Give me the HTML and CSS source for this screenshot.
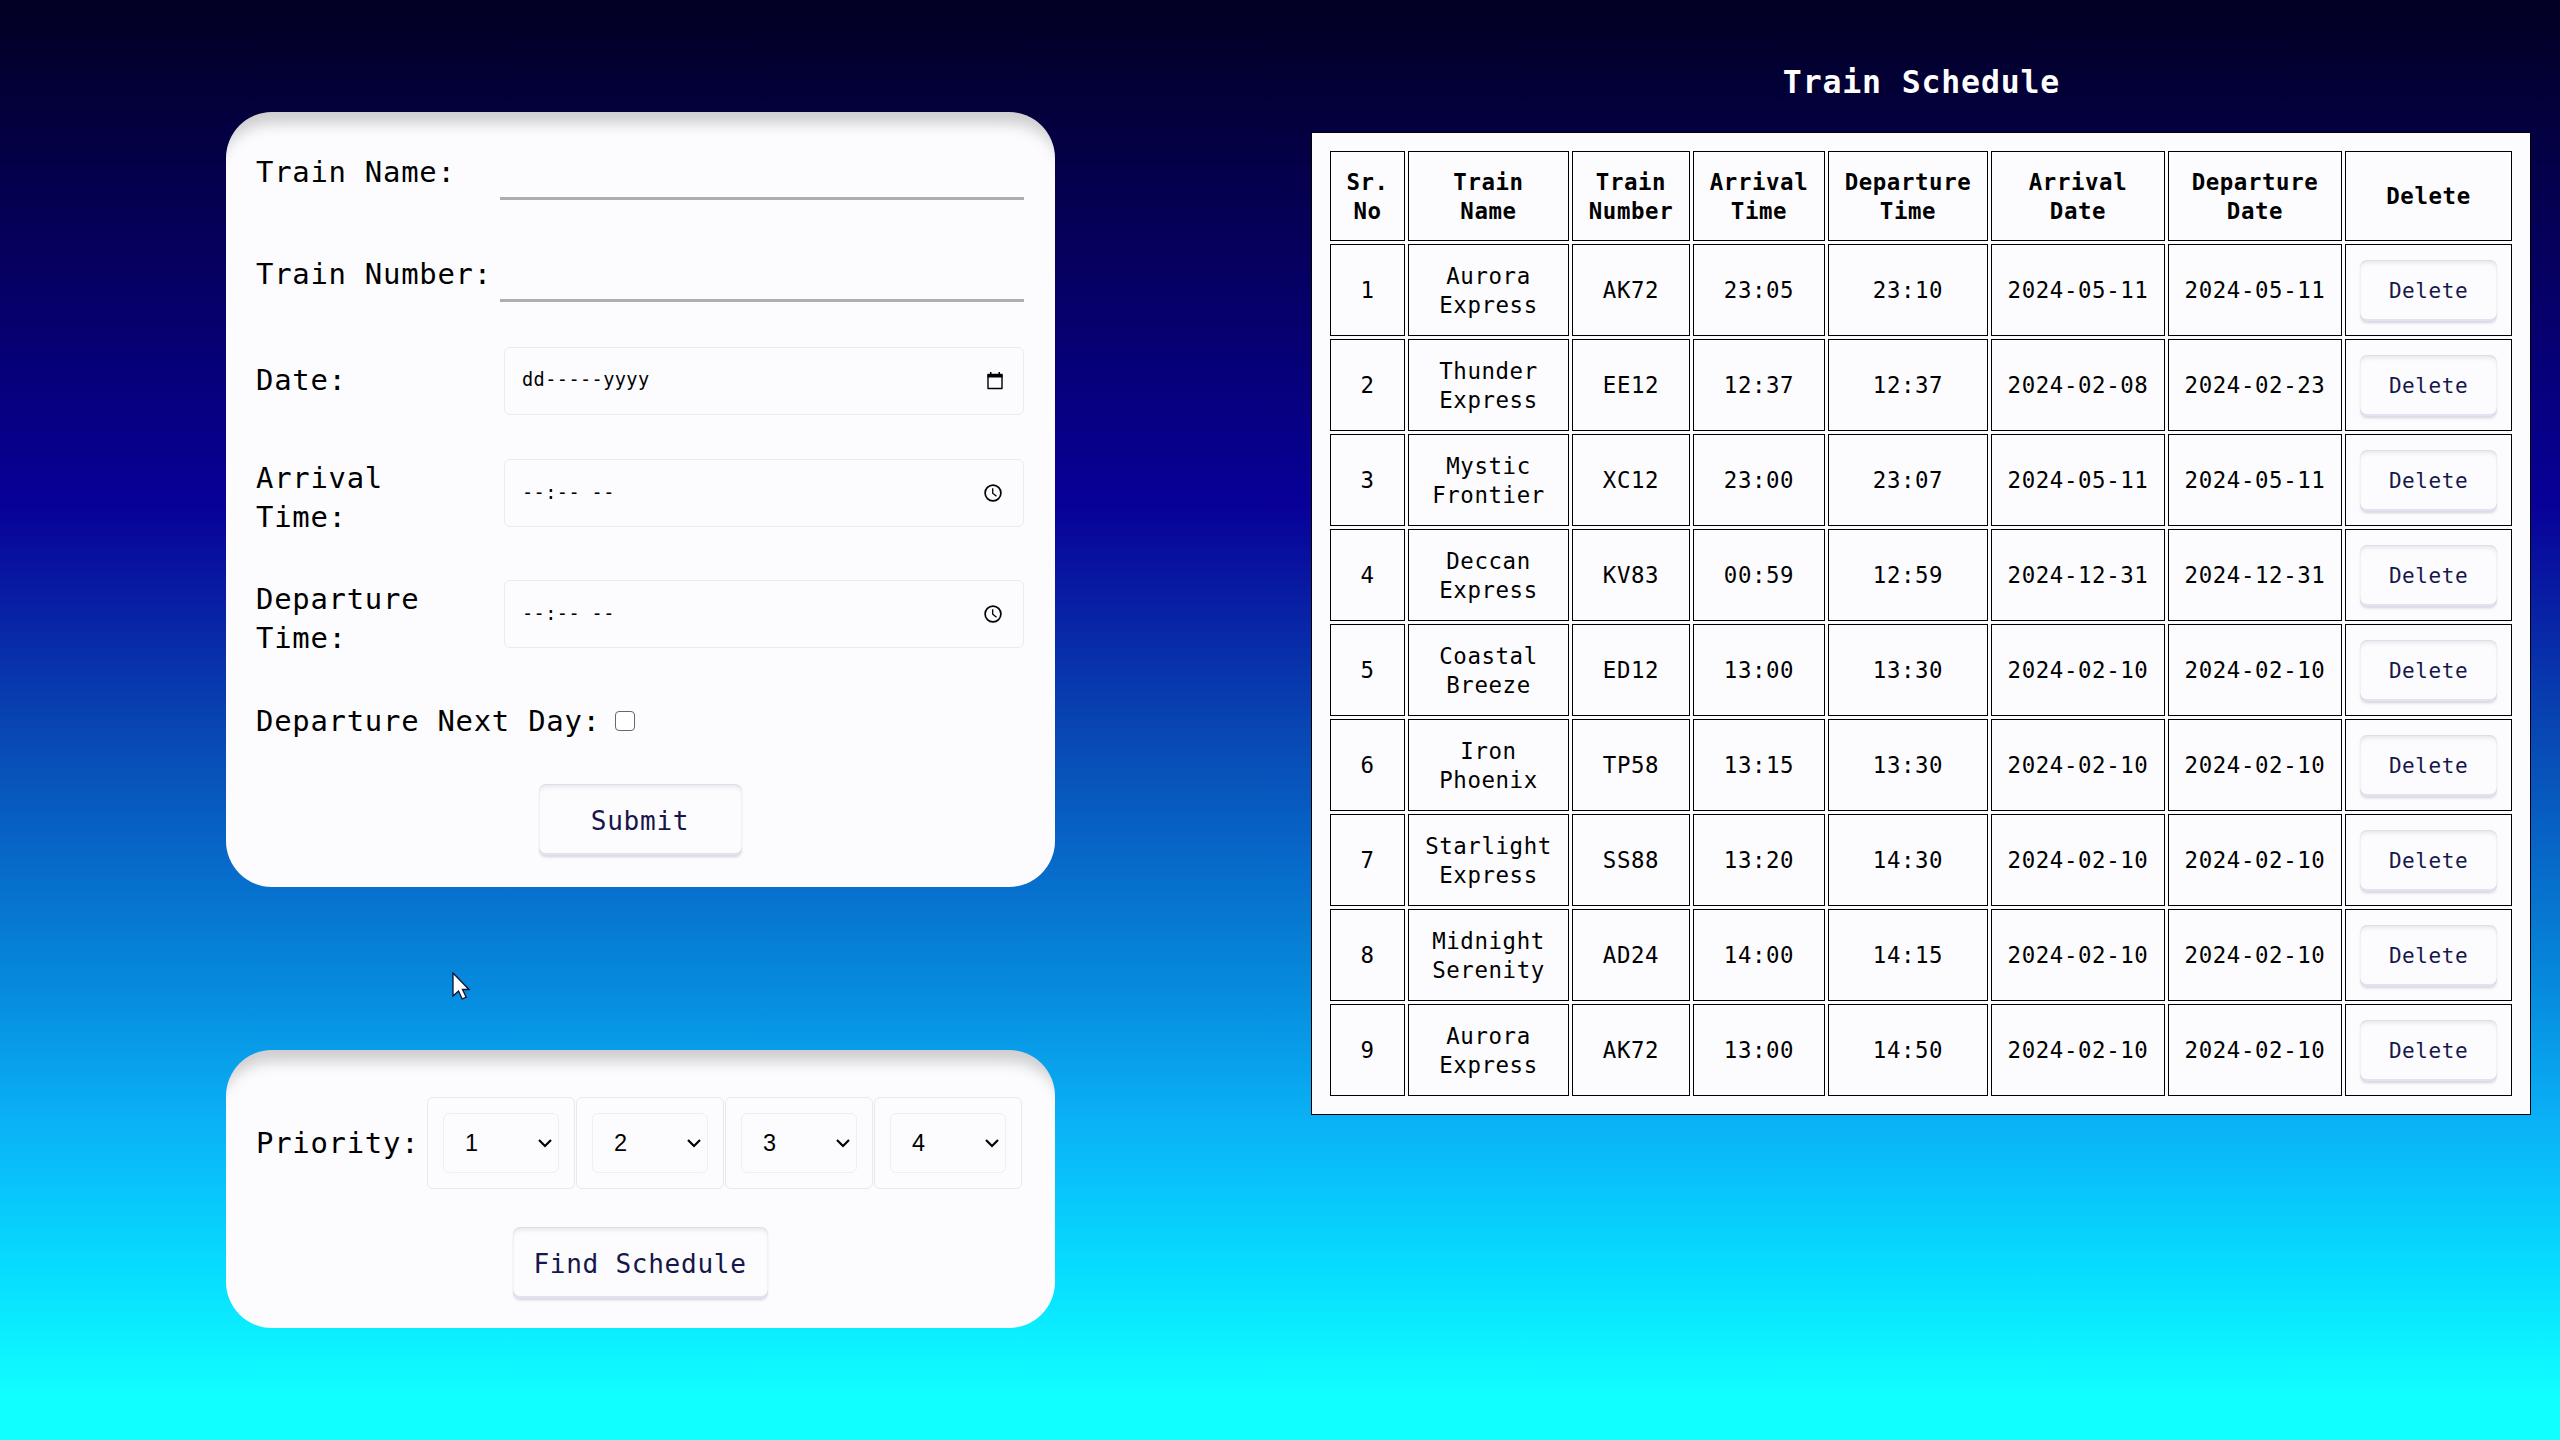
FILE: index.html
```html
<!DOCTYPE html>
<html lang="en">
<head>
<meta charset="utf-8">
<title>Train Schedule</title>
<link rel="stylesheet" href="styles.css">
</head>
<body>
<main class="page">
  <section class="forms">
    <form class="card train-form">
      <div class="row row-line"><label class="label">Train Name:</label><span class="line-input"></span></div>
      <div class="row row-line"><label class="label">Train Number:</label><span class="line-input"></span></div>
      <div class="row row-date"><label class="label">Date:</label>
        <span class="picker"><span>dd-----yyyy</span>
          <svg class="icon" viewBox="0 0 16 18"><path d="M1 3h14v13.5H1z" fill="none" stroke="#000" stroke-width="1.4" stroke-linejoin="round"/><path d="M.5 1.8h15V5.500H.5zM3 0h1.500v3H3zM11.500 0H13v3h-1.500z"/></svg></span></div>
      <div class="row row-time"><label class="label">Arrival<br>Time:</label>
        <span class="picker picker-time"><span>--:-- --</span>
          <svg class="icon" viewBox="0 0 18 18"><circle cx="9" cy="9" r="7.900" fill="none" stroke="#000" stroke-width="1.700"/><path d="M8.700 4.300v5l3.800 3" fill="none" stroke="#000" stroke-width="1.300"/></svg></span></div>
      <div class="row row-time"><label class="label">Departure<br>Time:</label>
        <span class="picker picker-time"><span>--:-- --</span>
          <svg class="icon" viewBox="0 0 18 18"><circle cx="9" cy="9" r="7.900" fill="none" stroke="#000" stroke-width="1.700"/><path d="M8.700 4.300v5l3.800 3" fill="none" stroke="#000" stroke-width="1.300"/></svg></span></div>
      <div class="row row-check"><label>Departure Next Day:</label><span class="checkbox"></span></div>
      <button type="button" class="btn btn-submit">Submit</button>
    </form>
    <form class="card priority-form">
      <div class="row row-priority"><label class="label-priority">Priority:</label>
        <div class="selects">
          <span class="select-box"><span class="select">1<svg class="chevron" viewBox="0 0 14 9"><path d="M1 1l6 6 6-6"/></svg></span></span>
          <span class="select-box"><span class="select">2<svg class="chevron" viewBox="0 0 14 9"><path d="M1 1l6 6 6-6"/></svg></span></span>
          <span class="select-box"><span class="select">3<svg class="chevron" viewBox="0 0 14 9"><path d="M1 1l6 6 6-6"/></svg></span></span>
          <span class="select-box"><span class="select">4<svg class="chevron" viewBox="0 0 14 9"><path d="M1 1l6 6 6-6"/></svg></span></span>
        </div>
      </div>
      <button type="button" class="btn btn-find">Find Schedule</button>
    </form>
  </section>
  <section class="schedule">
    <h2 class="title">Train Schedule</h2>
    <table class="table">
      <colgroup><col class="c-no"><col class="c-name"><col class="c-num"><col class="c-arr"><col class="c-dep"><col class="c-date"><col class="c-date"><col class="c-del"></colgroup>
      <thead><tr><th>Sr.<br>No</th><th>Train<br>Name</th><th>Train<br>Number</th><th>Arrival<br>Time</th><th>Departure<br>Time</th><th>Arrival<br>Date</th><th>Departure<br>Date</th><th>Delete</th></tr></thead>
      <tbody>
        <tr><td>1</td><td>Aurora<br>Express</td><td>AK72</td><td>23:05</td><td>23:10</td><td>2024-05-11</td><td>2024-05-11</td><td><button class="btn btn-delete">Delete</button></td></tr>
        <tr><td>2</td><td>Thunder<br>Express</td><td>EE12</td><td>12:37</td><td>12:37</td><td>2024-02-08</td><td>2024-02-23</td><td><button class="btn btn-delete">Delete</button></td></tr>
        <tr><td>3</td><td>Mystic<br>Frontier</td><td>XC12</td><td>23:00</td><td>23:07</td><td>2024-05-11</td><td>2024-05-11</td><td><button class="btn btn-delete">Delete</button></td></tr>
        <tr><td>4</td><td>Deccan<br>Express</td><td>KV83</td><td>00:59</td><td>12:59</td><td>2024-12-31</td><td>2024-12-31</td><td><button class="btn btn-delete">Delete</button></td></tr>
        <tr><td>5</td><td>Coastal<br>Breeze</td><td>ED12</td><td>13:00</td><td>13:30</td><td>2024-02-10</td><td>2024-02-10</td><td><button class="btn btn-delete">Delete</button></td></tr>
        <tr><td>6</td><td>Iron<br>Phoenix</td><td>TP58</td><td>13:15</td><td>13:30</td><td>2024-02-10</td><td>2024-02-10</td><td><button class="btn btn-delete">Delete</button></td></tr>
        <tr><td>7</td><td>Starlight<br>Express</td><td>SS88</td><td>13:20</td><td>14:30</td><td>2024-02-10</td><td>2024-02-10</td><td><button class="btn btn-delete">Delete</button></td></tr>
        <tr><td>8</td><td>Midnight<br>Serenity</td><td>AD24</td><td>14:00</td><td>14:15</td><td>2024-02-10</td><td>2024-02-10</td><td><button class="btn btn-delete">Delete</button></td></tr>
        <tr><td>9</td><td>Aurora<br>Express</td><td>AK72</td><td>13:00</td><td>14:50</td><td>2024-02-10</td><td>2024-02-10</td><td><button class="btn btn-delete">Delete</button></td></tr>
      </tbody>
    </table>
  </section>
</main>
<svg class="cursor" viewBox="0 0 18 28"><path d="M1 1v23l5.500-5 3.700 8 4-1.800-3.700-7.700H17z" fill="#fff" stroke="#101030" stroke-width="1.300"/></svg>
</body>
</html>
```
FILE: styles.css
```css
* { box-sizing: border-box; }

body {
  margin: 0;
  height: 1440px;
  overflow: hidden;
  background: linear-gradient(180deg, #020022 0%, #080098 35%, #0848b4 51%, #068cdf 69%, #0ab2f6 78%, #06dcff 88%, #10ffff 97%);
  color: #000;
  font-family: "DejaVu Sans Mono", "Liberation Mono", monospace;
}

.page { display: flex; height: 1440px; }

.forms {
  width: 1311px;
  padding: 112px 256px 0 226px;
  display: flex;
  flex-direction: column;
  gap: 163px;
}

.card {
  width: 829px;
  padding: 0 31px 0 30px;
  border-radius: 46px;
  background: #fcfcfe;
  box-shadow: inset 0 24px 14px -12px rgba(0, 0, 0, 0.18);
  font-size: 28.9px;
  letter-spacing: 0.75px;
  line-height: 38.500px;
  display: flex;
  flex-direction: column;
  align-items: stretch;
}

.train-form { height: 775px; padding-top: 20px; }
.priority-form { height: 278px; padding-top: 47px; }

.row { display: flex; align-items: center; }
.label { width: 248px; white-space: nowrap; flex: none; }

.row-line { height: 102px; align-items: flex-start; padding-top: 21px; }
.line-input {
  width: 524px;
  height: 47px;
  margin-left: -4px;
  border-bottom: 3px solid #aeaeb2;
}

.row-date { height: 67px; margin-top: 11px; }
.row-time { height: 78px; margin-top: 40px; }
.row-time + .row-time { margin-top: 43px; }
.row-time .label { padding-top: 9px; }

.picker {
  display: flex;
  align-items: center;
  justify-content: space-between;
  width: 520px;
  height: 68px;
  padding: 0 20px 0 17px;
  border: 1px solid #eaeaf4;
  border-radius: 6px;
  font-size: 18.600px;
  letter-spacing: 0.4px;
}
.picker-time { padding-right: 21px; }
.icon { width: 16px; height: 18px; }
.picker-time .icon { width: 18px; }

.row-check { height: 40px; margin-top: 48px; gap: 14px; }
.checkbox {
  width: 20px;
  height: 20px;
  border: 1.500px solid #66666c;
  border-radius: 4px;
  background: #fff;
}

.btn {
  display: block;
  padding: 1px 0 0;
  border: 0;
  border-radius: 7px;
  background: #fcfcfe;
  box-shadow: inset 0 5px 5px -3px rgba(40, 40, 90, 0.14), inset 0 0 0 1px rgba(45, 35, 66, 0.04), inset 0 -3px 0 #e4e2f0, 0 2px 3px -1px rgba(45, 35, 66, 0.2);
  color: #16164a;
  font: 26.100px "DejaVu Sans Mono", "Liberation Mono", monospace;
  letter-spacing: 0.69px;
}
.btn-submit { width: 203px; height: 72px; margin: 43px auto 0; }
.btn-find { width: 255px; height: 72px; margin: 38px auto 0; }

.row-priority { height: 92px; }
.label-priority { width: 171px; flex: none; }
.selects { display: grid; grid-template-columns: repeat(4, 148px); gap: 1px; }
.select-box {
  height: 92px;
  padding: 15px;
  border: 1px solid #e8e8f2;
  border-radius: 6px;
}
.select {
  display: flex;
  align-items: center;
  justify-content: space-between;
  height: 60px;
  padding: 0 6px 0 21px;
  border: 1px solid #eeeef4;
  border-radius: 6px;
  font: 23.500px "Liberation Sans", Arial, sans-serif;
  letter-spacing: 0;
}
.chevron { width: 14px; height: 9px; fill: none; stroke: #000; stroke-width: 2.200; }

.schedule { width: 1221px; }
.title {
  height: 132px;
  margin: 0;
  padding-top: 61px;
  color: #fff;
  font-size: 31.500px;
  letter-spacing: 0.84px;
  line-height: 42px;
  text-align: center;
}
.table {
  table-layout: fixed;
  width: 1220px;
  height: 983px;
  padding: 15px;
  border: 1px solid #000;
  border-spacing: 3px;
  background: #fcfcfe;
  font-size: 22.400px;
  letter-spacing: 0.6px;
  line-height: 29px;
  text-align: center;
}
.c-no { width: 75px; }
.c-name { width: 161px; }
.c-num { width: 118px; }
.c-arr { width: 132px; }
.c-dep { width: 160px; }
.c-date { width: 174px; }
.c-del { width: 167px; }
.table th { height: 90px; padding: 1px 0 0; border: 1px solid #000; }
.table td { height: 92px; padding: 1px 0 0; border: 1px solid #000; }
.btn-delete { width: 137px; height: 62px; margin: 0 auto; padding: 0; font-size: 21px; letter-spacing: 0.56px; }

.cursor { position: absolute; left: 452px; top: 972px; width: 18px; height: 28px; }
```
